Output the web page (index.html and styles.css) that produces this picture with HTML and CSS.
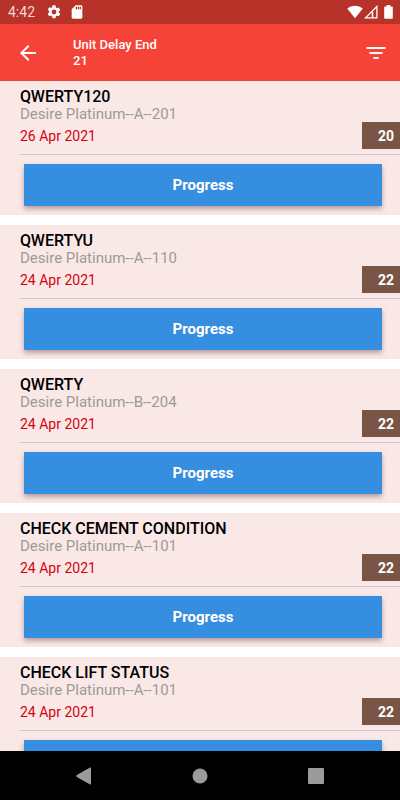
FILE: index.html
```html
<!DOCTYPE html>
<html lang="en">
<head>
<meta charset="utf-8">
<meta name="viewport" content="width=device-width, initial-scale=1">
<title>Unit Delay End</title>
<link rel="stylesheet" href="styles.css">
</head>
<body>
<div class="status">
  <span class="clock">4:42</span>
  <svg class="gear" width="16" height="16" viewBox="0 0 24 24" fill="currentColor" aria-hidden="true"><path d="M19.14 12.94c.04-.3.06-.61.06-.94s-.02-.64-.07-.94l2.03-1.58a.49.49 0 0 0 .12-.61l-1.92-3.32a.49.49 0 0 0-.59-.22l-2.39.96a7 7 0 0 0-1.62-.94l-.36-2.54A.48.48 0 0 0 13.92 2h-3.84a.48.48 0 0 0-.48.41l-.36 2.54c-.59.24-1.13.57-1.62.94l-2.39-.96a.48.48 0 0 0-.59.22L2.72 8.47a.48.48 0 0 0 .12.61l2.03 1.58c-.05.3-.07.62-.07.94s.02.64.07.94l-2.03 1.58a.49.49 0 0 0-.12.61l1.92 3.32c.12.22.37.29.59.22l2.39-.96c.5.38 1.03.7 1.62.94l.36 2.54c.05.24.24.41.48.41h3.84c.24 0 .44-.17.47-.41l.36-2.54a7 7 0 0 0 1.62-.94l2.39.96c.22.08.47 0 .59-.22l1.92-3.32a.48.48 0 0 0-.12-.61zM12 15.6a3.6 3.6 0 1 1 0-7.2 3.6 3.6 0 0 1 0 7.2z"/></svg>
  <svg class="sd" width="16" height="16" viewBox="0 0 24 24" fill="currentColor" aria-hidden="true"><path d="M18 2h-8L4 8v12c0 1.100.9 2 2 2h12c1.100 0 2-.9 2-2V4c0-1.100-.9-2-2-2zm-6 6h-2V4h2zm3 0h-2V4h2zm3 0h-2V4h2z"/></svg>
  <span class="signals">
    <svg width="16" height="14" viewBox="0 0 16 14" fill="currentColor" aria-hidden="true"><path d="M8 13.200.200 3.600C2.400 1.700 5 .7 8 .7s5.600 1 7.800 2.900z"/></svg>
    <svg width="14" height="14" viewBox="0 0 14 14" fill="none" stroke="currentColor" aria-hidden="true"><path d="M1.500 12.900H12.900V1.500z" stroke-width="1.300"/><path d="M8.500 12.500V7" stroke-width="1.600"/></svg>
    <svg class="battery" width="9" height="14" viewBox="0 0 9 14" fill="currentColor" aria-hidden="true"><path d="M2.700 0h3.600v1.500H8q.8 0 .8.800v10.700q0 .8-.8.800H1q-.8 0-.8-.8V2.300q0-.8.8-.8h1.700z"/></svg>
  </span>
</div>
<header class="appbar">
  <button class="icon" aria-label="Back"><svg width="24" height="24" viewBox="0 0 24 24" fill="currentColor"><path d="M20 11H7.830l5.590-5.590L12 4l-8 8 8 8 1.410-1.410L7.830 13H20z"/></svg></button>
  <h1 class="heading">Unit Delay End<br>21</h1>
  <button class="icon" aria-label="Filter"><svg width="24" height="24" viewBox="0 0 24 24" fill="currentColor"><path d="M9.500 18h5v-2h-5zM2.500 6v2h19V6zM5.500 13h13v-2h-13z"/></svg></button>
</header>
<main class="list">
  <article class="card">
    <h2 class="title">QWERTY120</h2>
    <p class="unit">Desire Platinum--A--201</p>
    <div class="due"><time>26 Apr 2021</time><span class="badge">20</span></div>
    <div class="action"><button class="progress">Progress</button></div>
  </article>
  <article class="card">
    <h2 class="title">QWERTYU</h2>
    <p class="unit">Desire Platinum--A--110</p>
    <div class="due"><time>24 Apr 2021</time><span class="badge">22</span></div>
    <div class="action"><button class="progress">Progress</button></div>
  </article>
  <article class="card">
    <h2 class="title">QWERTY</h2>
    <p class="unit">Desire Platinum--B--204</p>
    <div class="due"><time>24 Apr 2021</time><span class="badge">22</span></div>
    <div class="action"><button class="progress">Progress</button></div>
  </article>
  <article class="card">
    <h2 class="title">CHECK CEMENT CONDITION</h2>
    <p class="unit">Desire Platinum--A--101</p>
    <div class="due"><time>24 Apr 2021</time><span class="badge">22</span></div>
    <div class="action"><button class="progress">Progress</button></div>
  </article>
  <article class="card">
    <h2 class="title">CHECK LIFT STATUS</h2>
    <p class="unit">Desire Platinum--A--101</p>
    <div class="due"><time>24 Apr 2021</time><span class="badge">22</span></div>
    <div class="action"><button class="progress">Progress</button></div>
  </article>
</main>
<nav class="navbar" aria-label="System">
  <button class="key" aria-label="Back"><svg width="16" height="18" viewBox="0 0 16 18" fill="currentColor"><path d="M14.500.8V17.200L.8 9.500V8.500z" stroke="currentColor" stroke-width="1" stroke-linejoin="round"/></svg></button>
  <button class="key" aria-label="Home"><svg width="16" height="16" viewBox="0 0 16 16" fill="currentColor"><circle cx="8" cy="8" r="7.500"/></svg></button>
  <button class="key" aria-label="Recent apps"><svg width="16" height="16" viewBox="0 0 16 16" fill="currentColor"><rect width="16" height="16" rx="1"/></svg></button>
</nav>
</body>
</html>
```

FILE: styles.css
```css
* {
  box-sizing: border-box;
}

body {
  margin: 0;
  height: 100vh;
  display: flex;
  flex-direction: column;
  background: #fff;
  font-family: Roboto, "Liberation Sans", sans-serif;
}

h1, h2, p {
  margin: 0;
}

button {
  border: 0;
  padding: 0;
  font-family: inherit;
  cursor: pointer;
}

svg {
  display: block;
}

.status {
  flex: none;
  height: 24px;
  padding: 0 7px 0 8px;
  display: flex;
  align-items: center;
  background: #b73229;
  color: #fff;
}

.clock {
  font-size: 14px;
  line-height: 16px;
  color: #f5d9d7;
}

.gear {
  margin-left: 11px;
}

.sd {
  margin-left: 7px;
}

.signals {
  margin-left: auto;
  display: flex;
  gap: 1px;
}

.battery {
  margin-left: 5px;
}

.appbar {
  flex: none;
  height: 57px;
  padding: 0 12px 0 16px;
  display: flex;
  align-items: center;
  background: #f54337;
  color: #fff;
}

.icon {
  background: none;
  color: inherit;
}

.heading {
  flex: 1;
  margin-left: 33px;
  font-size: 13px;
  line-height: 16px;
  font-weight: 500;
}

.list {
  flex: 1;
  min-height: 0;
  overflow-y: auto;
  scrollbar-width: none;
}

.card {
  margin-bottom: 10px;
  padding: 7px 0 9px 20px;
  background: #fae8e6;
}

.title {
  font-size: 16px;
  line-height: 18px;
  font-weight: 500;
  color: #000;
}

.unit {
  font-size: 15px;
  line-height: 16px;
  color: #9a9a9a;
}

.due {
  height: 27px;
  display: flex;
  align-items: center;
  justify-content: space-between;
  font-size: 14px;
  color: #d6000f;
}

.badge {
  width: 38px;
  padding: 6px 6px 5px 0;
  line-height: 16px;
  text-align: right;
  font-weight: 700;
  background: #795548;
  color: #fff;
}

.action {
  margin-top: 5px;
  padding: 9px 18px 0 4px;
  border-top: 1px solid #d3c5c4;
}

.progress {
  display: block;
  width: 100%;
  height: 42px;
  background: #368ee0;
  color: #fff;
  font-size: 15px;
  font-weight: 700;
  box-shadow: 0 3px 5px rgba(60, 30, 30, 0.35);
}

.navbar {
  flex: none;
  height: 49px;
  padding: 0 26px;
  display: flex;
  align-items: center;
  background: #000;
}

.key {
  flex: 1;
  display: flex;
  justify-content: center;
  background: none;
  color: #9b9b9b;
}
```
